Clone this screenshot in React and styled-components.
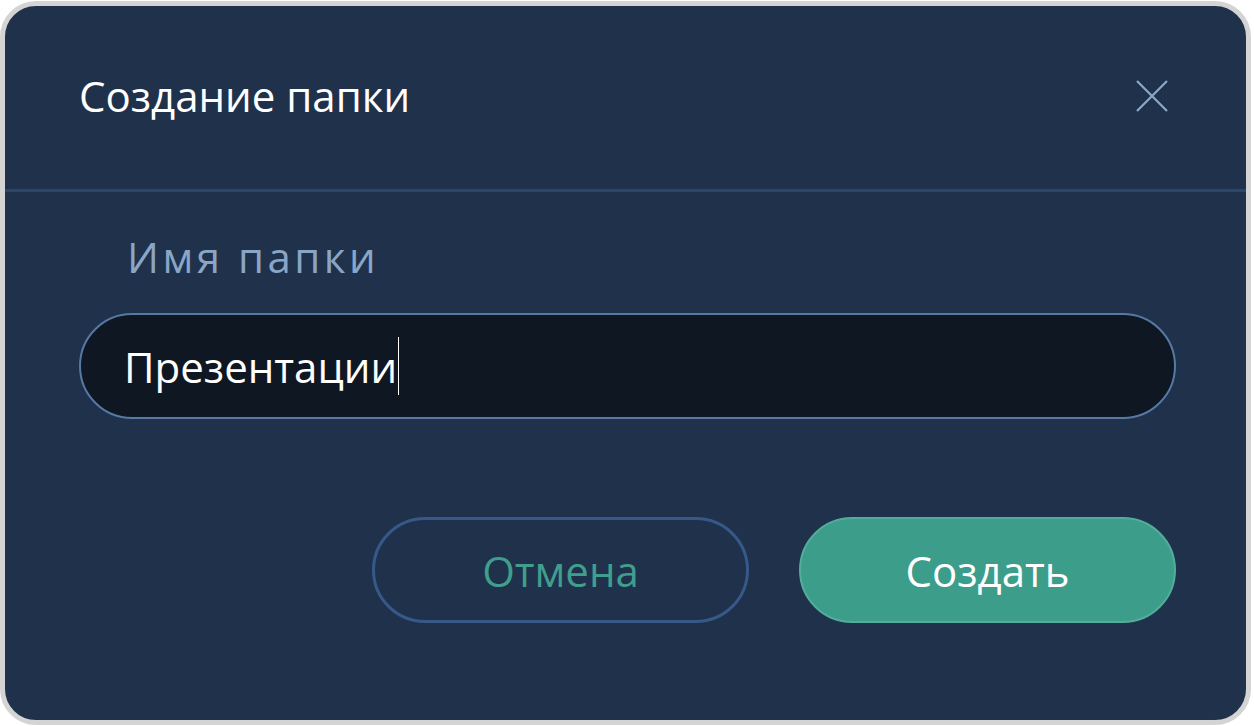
import React from "react";
import styled, { createGlobalStyle } from "styled-components";

const Global = createGlobalStyle`
  html, body { margin: 0; padding: 0; background: #ffffff; }
  body { font-family: "Open Sans", "Noto Sans", sans-serif; }
  * { box-sizing: border-box; }
`;

const Dialog = styled.div`
  width: 1251px;
  height: 724px;
  margin-top: 1px;
  border: 5px solid #d4d4d4;
  border-radius: 36px;
  background: #20324b;
  display: flex;
  flex-direction: column;
  overflow: hidden;
`;

const Header = styled.div`
  height: 186px;
  flex: none;
  display: flex;
  align-items: center;
  justify-content: space-between;
  padding: 0 77px 4px 74px;
  border-bottom: 3px solid #2a4668;
`;

const Title = styled.h2`
  margin: 0;
  font-size: 42px;
  line-height: 56px;
  font-weight: 400;
  color: #ffffff;
`;

const CloseButton = styled.button`
  width: 34px;
  height: 34px;
  padding: 0;
  border: 0;
  background: transparent;
  display: flex;
  align-items: center;
  justify-content: center;
  cursor: pointer;
`;

const Body = styled.div`
  flex: 1;
  display: flex;
  flex-direction: column;
  padding: 39px 70px 0 74px;
`;

const Label = styled.label`
  font-size: 42px;
  letter-spacing: 3.5px;
  color: #8aa6c6;
  padding-left: 48px;
  line-height: 52px;
`;

const InputBox = styled.div`
  margin-top: 30px;
  height: 106px;
  border: 2px solid #5679a6;
  border-radius: 53px;
  background: #0f1723;
  display: flex;
  align-items: center;
  padding-left: 43px;
`;

const InputText = styled.span`
  font-size: 42px;
  color: #ffffff;
`;

const Caret = styled.span`
  display: inline-block;
  width: 1px;
  height: 58px;
  background: #ffffff;
  margin-left: 1px;
`;

const Actions = styled.div`
  margin-top: 98px;
  display: flex;
  justify-content: flex-end;
  gap: 50px;
`;

const Button = styled.button`
  width: 377px;
  height: 106px;
  border-radius: 53px;
  font-family: "Open Sans", "Noto Sans", sans-serif;
  font-size: 42px;
  cursor: pointer;
  border: ${(p) => (p.$primary ? "2px solid #52ad9b" : "3px solid #36598a")};
  background: ${(p) => (p.$primary ? "#3d9d8b" : "transparent")};
  color: ${(p) => (p.$primary ? "#ffffff" : "#3f9e8c")};
`;

export default function App() {
  return (
    <>
      <Global />
      <Dialog>
        <Header>
          <Title>Создание папки</Title>
          <CloseButton aria-label="Закрыть">
            <svg width="32" height="32" viewBox="0 0 32 32">
              <path d="M1 1 L31 31 M31 1 L1 31" stroke="#8aaac8" strokeWidth="2.2" />
            </svg>
          </CloseButton>
        </Header>
        <Body>
          <Label>Имя папки</Label>
          <InputBox>
            <InputText>Презентации</InputText>
            <Caret />
          </InputBox>
          <Actions>
            <Button>Отмена</Button>
            <Button $primary>Создать</Button>
          </Actions>
        </Body>
      </Dialog>
    </>
  );
}
